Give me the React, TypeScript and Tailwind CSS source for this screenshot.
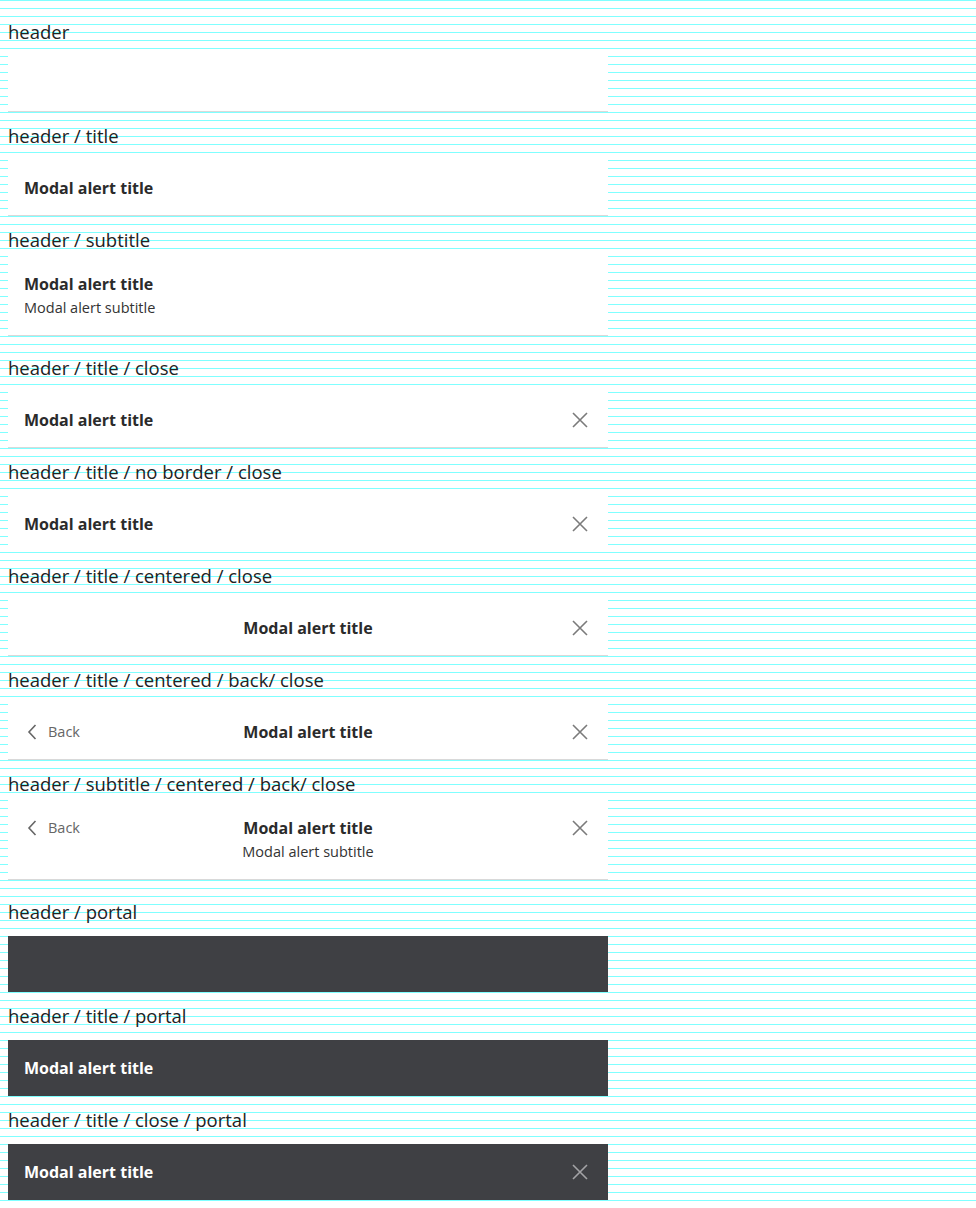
const Close = ({ dark }: { dark?: boolean }) => (
  <svg width="16" height="16" viewBox="0 0 16 16" className="shrink-0">
    <path
      d="M1 1 15 15 M15 1 1 15"
      stroke={dark ? "#a3a3a6" : "#7b7b7b"}
      strokeWidth="1.6"
      fill="none"
    />
  </svg>
);

const Back = () => (
  <div className="flex items-center gap-[11px] text-[14.5px] leading-6 text-[#666]">
    <svg width="10" height="16" viewBox="0 0 10 16" className="ml-[3px]">
      <path d="M8.5 1 2 8 8.5 15" stroke="#666" strokeWidth="1.6" fill="none" />
    </svg>
    <span>Back</span>
  </div>
);

const Title = ({ dark }: { dark?: boolean }) => (
  <div className={`text-[16px] font-bold leading-6 ${dark ? "text-white" : "text-[#2b2b2b]"}`}>
    Modal alert title
  </div>
);

const Subtitle = () => (
  <div className="text-[14.5px] leading-6 text-[#333]">Modal alert subtitle</div>
);

const Label = ({ text, short }: { text: string; short?: boolean }) => (
  <div className={`pl-2 pt-3 text-[18.5px] leading-6 text-[#222] ${short ? "h-10" : "h-12"}`}>
    {text}
  </div>
);

const Box = ({ children, dark, border = true, tall }: any) => (
  <div
    className={`w-[600px] ml-2 ${tall ? "h-20 py-4" : "h-14"} ${
      dark ? "bg-[#3f4044]" : "bg-white"
    } ${border && !dark ? "border-b border-[#d9d9d9]" : ""}`}
  >
    {children}
  </div>
);

export default function App() {
  return (
    <div
      className="min-h-screen pt-2 bg-white bg-[linear-gradient(#80ffff_1px,transparent_1px)] bg-[size:100%_8px]"
      style={{ fontFamily: '"Open Sans", sans-serif' }}
    >
      <Label text="header" />
      <Box />

      <Label text="header / title" />
      <Box>
        <div className="flex h-full items-center px-4">
          <Title />
        </div>
      </Box>

      <Label text="header / subtitle" short />
      <Box tall>
        <div className="px-4">
          <Title />
          <Subtitle />
        </div>
      </Box>
      <div className="h-2" />

      <Label text="header / title / close" />
      <Box>
        <div className="flex h-full items-center justify-between pl-4 pr-5">
          <Title />
          <Close />
        </div>
      </Box>

      <Label text="header / title / no border / close" />
      <Box border={false}>
        <div className="flex h-full items-center justify-between pl-4 pr-5">
          <Title />
          <Close />
        </div>
      </Box>

      <Label text="header / title / centered / close" />
      <Box>
        <div className="grid h-full grid-cols-[1fr_auto_1fr] items-center px-4">
          <div />
          <Title />
          <div className="flex justify-end pr-1">
            <Close />
          </div>
        </div>
      </Box>

      <Label text="header / title / centered / back/ close" />
      <Box>
        <div className="grid h-full grid-cols-[1fr_auto_1fr] items-center px-4">
          <Back />
          <Title />
          <div className="flex justify-end pr-1">
            <Close />
          </div>
        </div>
      </Box>

      <Label text="header / subtitle / centered / back/ close" short />
      <Box tall>
        <div className="grid grid-cols-[1fr_auto_1fr] items-start px-4">
          <Back />
          <div className="text-center">
            <Title />
            <Subtitle />
          </div>
          <div className="flex h-6 items-center justify-end pr-1">
            <Close />
          </div>
        </div>
      </Box>
      <div className="h-2" />

      <Label text="header / portal" />
      <Box dark />

      <Label text="header / title / portal" />
      <Box dark>
        <div className="flex h-full items-center px-4">
          <Title dark />
        </div>
      </Box>

      <Label text="header / title / close / portal" />
      <Box dark>
        <div className="flex h-full items-center justify-between pl-4 pr-5">
          <Title dark />
          <Close dark />
        </div>
      </Box>
    </div>
  );
}
